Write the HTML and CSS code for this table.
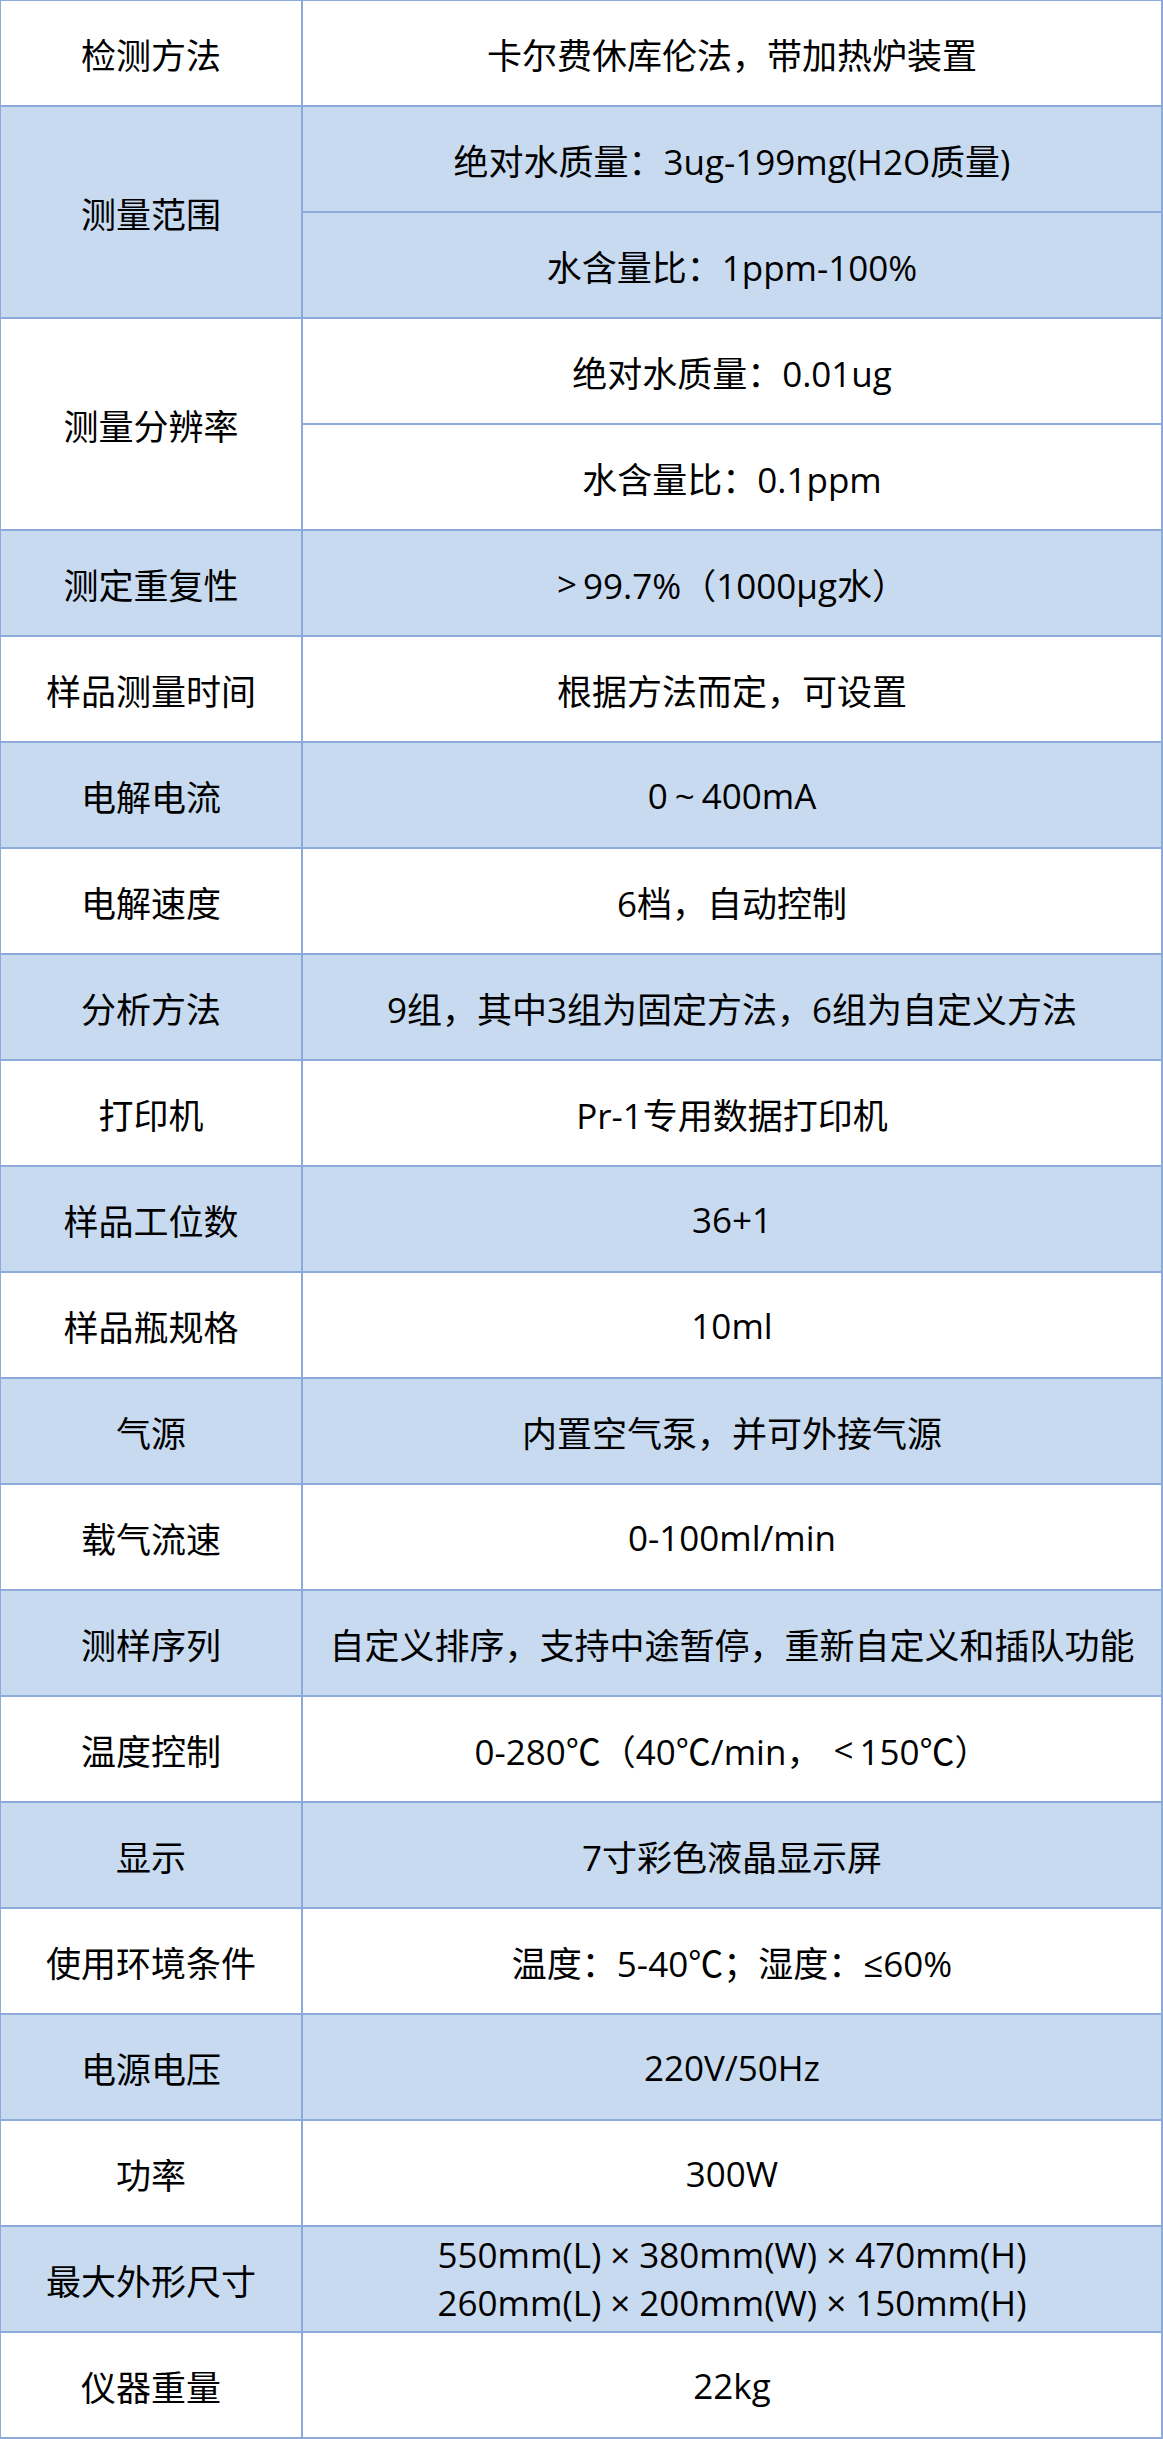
FILE: index.html
```html
<!DOCTYPE html>
<html lang="zh-CN">
<head>
<meta charset="utf-8">
<title>技术参数</title>
<link rel="stylesheet" href="styles.css">
</head>
<body>
<div class="spec">
  <div class="row"><div class="label">检测方法</div><div class="value">卡尔费休库伦法，带加热炉装置</div></div>
  <div class="row blue"><div class="label">测量范围</div><div class="values"><div class="value sub">绝对水质量：3ug-199mg(H2O质量)</div><div class="value">水含量比：1ppm-100%</div></div></div>
  <div class="row"><div class="label">测量分辨率</div><div class="values"><div class="value sub">绝对水质量：0.01ug</div><div class="value">水含量比：0.1ppm</div></div></div>
  <div class="row blue"><div class="label">测定重复性</div><div class="value"><span class="cmp">&gt;</span>99.7%（1000μg水）</div></div>
  <div class="row"><div class="label">样品测量时间</div><div class="value">根据方法而定，可设置</div></div>
  <div class="row blue"><div class="label">电解电流</div><div class="value">0<span class="tilde">~</span>400mA</div></div>
  <div class="row"><div class="label">电解速度</div><div class="value">6档，自动控制</div></div>
  <div class="row blue"><div class="label">分析方法</div><div class="value">9组，其中3组为固定方法，6组为自定义方法</div></div>
  <div class="row"><div class="label">打印机</div><div class="value">Pr-1专用数据打印机</div></div>
  <div class="row blue"><div class="label">样品工位数</div><div class="value">36+1</div></div>
  <div class="row"><div class="label">样品瓶规格</div><div class="value">10ml</div></div>
  <div class="row blue"><div class="label">气源</div><div class="value">内置空气泵，并可外接气源</div></div>
  <div class="row"><div class="label">载气流速</div><div class="value">0-100ml/min</div></div>
  <div class="row blue"><div class="label">测样序列</div><div class="value">自定义排序，支持中途暂停，重新自定义和插队功能</div></div>
  <div class="row"><div class="label">温度控制</div><div class="value">0-280℃（40℃/min，<span class="cmp lt">&lt;</span>150℃）</div></div>
  <div class="row blue"><div class="label">显示</div><div class="value">7寸彩色液晶显示屏</div></div>
  <div class="row"><div class="label">使用环境条件</div><div class="value">温度：5-40℃；湿度：≤60%</div></div>
  <div class="row blue"><div class="label">电源电压</div><div class="value">220V/50Hz</div></div>
  <div class="row"><div class="label">功率</div><div class="value">300W</div></div>
  <div class="row blue"><div class="label">最大外形尺寸</div><div class="value multi"><span>550mm(L)<span class="times">×</span>380mm(W)<span class="times">×</span>470mm(H)</span><span>260mm(L)<span class="times">×</span>200mm(W)<span class="times">×</span>150mm(H)</span></div></div>
  <div class="row"><div class="label">仪器重量</div><div class="value">22kg</div></div>
</div>
</body>
</html>
```

FILE: styles.css
```css
html, body {
  margin: 0;
  padding: 0;
  background: #ffffff;
}

.spec {
  width: 1163px;
  box-sizing: border-box;
  border-top: 1px solid #8eaadb;
  border-left: 1px solid #8eaadb;
  border-right: 2px solid #8eaadb;
  font-family: "Open Sans", "Noto Sans CJK SC", sans-serif;
  font-size: 35px;
  color: #000000;
}

.row {
  display: grid;
  grid-template-columns: 302px 1fr;
  border-bottom: 2px solid #8eaadb;
  background: #ffffff;
}

.row.blue {
  background: #c8daef;
}

.label {
  border-right: 2px solid #8eaadb;
  display: flex;
  align-items: center;
  justify-content: center;
  white-space: nowrap;
}

.values {
  display: flex;
  flex-direction: column;
}

.value {
  height: 104px;
  display: flex;
  align-items: center;
  justify-content: center;
  white-space: nowrap;
}

.value.sub {
  border-bottom: 2px solid #8eaadb;
}

.value.multi {
  flex-direction: column;
  line-height: 48px;
}

.cmp {
  margin-right: 6px;
}

.cmp.lt {
  margin-left: 12px;
}

.tilde {
  margin: 0 7px;
}

.times {
  margin: 0 9px;
}
```
